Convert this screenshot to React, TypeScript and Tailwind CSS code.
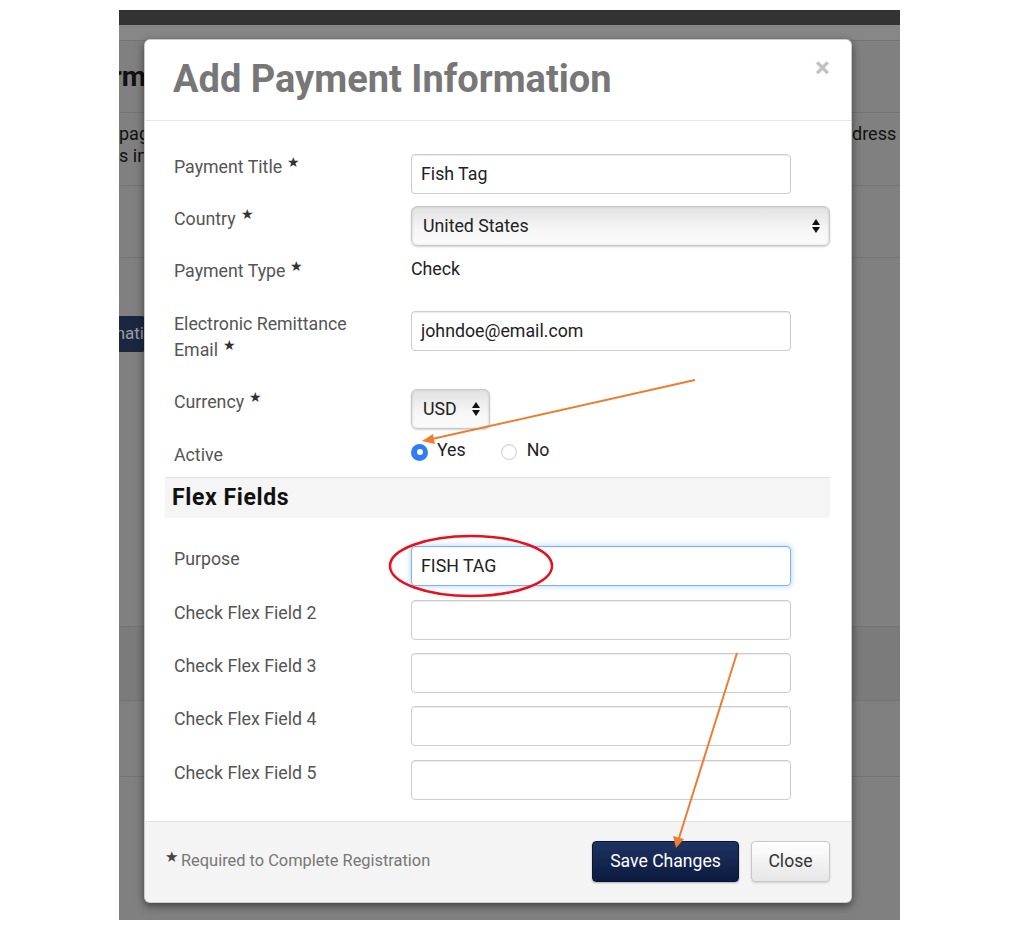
import React from "react";

const Star = () => (
  <span className="relative -top-[6px] ml-[5px] text-[14px] leading-none text-[#333]">★</span>
);

const Arrows = ({ className }: { className: string }) => (
  <svg className={className} width="8" height="14" viewBox="0 0 8 14">
    <path d="M0 6 L4 0 L8 6 Z" fill="#111" />
    <path d="M0 8 L8 8 L4 14 Z" fill="#111" />
  </svg>
);

const inputCls =
  "h-[40px] w-[380px] rounded-[4px] border border-[#cccccc] bg-white px-[9px] text-[17.75px] leading-[38px] text-[#222] shadow-[inset_0_1px_1px_rgba(0,0,0,0.08)]";

const selectCls =
  "h-[40px] rounded-[6px] border border-[#c9c9c9] bg-[linear-gradient(#e2e2e2,#f6f6f6_60%,#fbfbfb)] shadow-[0_1px_2px_rgba(0,0,0,0.18),inset_1px_0_2px_rgba(0,0,0,0.08),inset_-1px_0_2px_rgba(0,0,0,0.08)] flex items-center text-[17.75px] text-[#222]";

function Label({ children }: { children: React.ReactNode }) {
  return (
    <div className="w-[246px] shrink-0 pl-[9px] text-[17.75px] leading-[26px] text-[#555]">
      {children}
    </div>
  );
}

export default function App() {
  const flexRows: { label: string; mb: string }[] = [
    { label: "Check Flex Field 2", mb: "mb-[13px]" },
    { label: "Check Flex Field 3", mb: "mb-[13px]" },
    { label: "Check Flex Field 4", mb: "mb-[14px]" },
    { label: "Check Flex Field 5", mb: "" },
  ];
  return (
    <div className="relative h-[926px] w-[1019px] bg-white pl-[119px] pt-[10px] font-['Roboto','Liberation_Sans',sans-serif]">
      {/* Background page (dimmed) */}
      <div className="relative h-[910px] w-[781px] overflow-hidden bg-[#808080]">
        <div className="h-[15px] overflow-hidden bg-[#333333]">
          <div className="-mt-[16px] whitespace-nowrap pl-[20px] text-[14px] leading-[16px] text-[#bdbdbd]">
            , you agree to the Payment Registration terms, by using the management system you agree to the policy of the company group
          </div>
        </div>
        <div className="h-[16px] border-b border-[#747474] bg-[#878787]" />
        <div className="flex h-[72px] items-center border-b border-[#747474]">
          <div className="flex w-[27px] justify-end overflow-hidden">
            <span className="whitespace-nowrap text-[28px] font-bold text-[#111]">Inform</span>
          </div>
        </div>
        <div className="flex h-[73px] justify-between border-b border-[#747474] pt-[10px]">
          <div className="flex w-[25px] flex-col overflow-hidden text-[18px] leading-[22px] text-[#111]">
            <span className="whitespace-nowrap">pag</span>
            <span className="whitespace-nowrap">s inc</span>
          </div>
          <div className="w-[48px] overflow-hidden text-[18px] leading-[22px] text-[#111]">
            <span className="whitespace-nowrap">dress it if</span>
          </div>
        </div>
        <div className="h-[72px] border-b border-[#747474]" />
        <div className="h-[368px] pt-[58px]">
          <div className="flex h-[36px] w-[26px] items-center justify-end overflow-hidden rounded-r-[3px] bg-[#1b2740]">
            <span className="whitespace-nowrap pr-[1px] text-[17px] text-[#9a9ea8]">nati</span>
          </div>
        </div>
        <div className="h-[75px] border-y border-[#747474] bg-[#7b7b7b]" />
        <div className="h-[76px] border-b border-[#747474]" />

        {/* Modal */}
        <div className="absolute left-[25px] top-[29px] flex h-[864px] w-[708px] flex-col overflow-hidden rounded-[6px] border border-black/20 bg-white shadow-[0_3px_9px_rgba(0,0,0,0.5)]">
          <div className="relative h-[81px] shrink-0 border-b border-[#e5e5e5] pl-[28px] pt-[19px]">
            <h1 className="text-[38px] font-bold leading-[40px] text-[#777]">Add Payment Information</h1>
            <span className="absolute left-[670px] top-[12px] text-[28px] font-bold leading-[32px] text-[#c2c2c2]">×</span>
          </div>

          <div className="pl-[20px] pr-[21px] pt-[33px] pb-[21px]">
            <div className="mb-[12px] flex">
              <Label>
                Payment Title<Star />
              </Label>
              <div className={inputCls}>Fish Tag</div>
            </div>
            <div className="mb-[12px] flex">
              <Label>
                Country<Star />
              </Label>
              <div className={`${selectCls} w-[419px] justify-between pl-[11px] pr-[9px]`}>
                <span>United States</span>
                <Arrows className="" />
              </div>
            </div>
            <div className="mb-[13px] flex h-[40px]">
              <Label>
                Payment Type<Star />
              </Label>
              <div className="text-[17.75px] leading-[22px] text-[#222]">Check</div>
            </div>
            <div className="mb-[26px] flex">
              <Label>
                Electronic Remittance
                <br />
                Email<Star />
              </Label>
              <div className={inputCls}>johndoe@email.com</div>
            </div>
            <div className="mb-[13px] flex">
              <Label>
                Currency<Star />
              </Label>
              <div className={`${selectCls} w-[79px] justify-between pl-[11px] pr-[9px]`}>
                <span>USD</span>
                <Arrows className="" />
              </div>
            </div>
            <div className="mb-[9px] flex h-[26px]">
              <Label>Active</Label>
              <div className="flex h-[18px] items-center text-[17.75px] text-[#222]">
                <span className="mt-[2px] flex h-[17px] w-[17px] items-center justify-center rounded-full bg-[#2f7cf6]">
                  <span className="h-[6px] w-[6px] rounded-full bg-white" />
                </span>
                <span className="ml-[9px] -mt-[2px]">Yes</span>
                <span className="ml-[35px] mt-[2px] h-[16px] w-[16px] rounded-full border border-[#cfcfcf] bg-white shadow-[inset_0_1px_2px_rgba(0,0,0,0.08)]" />
                <span className="ml-[10px] -mt-[2px]">No</span>
              </div>
            </div>
            <div className="mb-[28px] flex h-[41px] items-center border-t border-[#e2e2e2] bg-[#f5f5f5] pl-[7px]">
              <span className="text-[23px] font-bold tracking-[0.6px] text-[#111]">Flex Fields</span>
            </div>
            <div className="mb-[14px] flex">
              <Label>Purpose</Label>
              <div className="h-[40px] w-[380px] rounded-[4px] border border-[#7fb3ee] bg-white px-[9px] text-[17.75px] leading-[38px] text-[#222] shadow-[inset_0_1px_1px_rgba(0,0,0,0.06),0_0_6px_rgba(102,175,233,0.55)]">
                FISH TAG
              </div>
            </div>
            {flexRows.map((r) => (
              <div key={r.label} className={`flex ${r.mb}`}>
                <Label>{r.label}</Label>
                <div className={inputCls} />
              </div>
            ))}
          </div>

          <div className="flex flex-1 items-start justify-between border-t border-[#e2e2e2] bg-[#f4f4f4] pl-[20px] pr-[21px] pt-[19px]">
            <div className="mt-[8px] flex items-start text-[16.4px] leading-[24px] text-[#777]">
              <span className="relative -top-[4px] text-[15px] text-[#444]">★</span>
              <span className="ml-[3px]">Required to Complete Registration</span>
            </div>
            <div className="flex gap-[12px]">
              <div className="flex h-[41px] w-[147px] items-center justify-center rounded-[4px] border border-[#0a1733] bg-[linear-gradient(#1f3363,#0b1a3e)] text-[17.6px] text-white shadow-[0_1px_2px_rgba(0,0,0,0.3)]">
                Save Changes
              </div>
              <div className="flex h-[41px] w-[79px] items-center justify-center rounded-[4px] border border-[#c8c8c8] bg-[linear-gradient(#ffffff,#e6e6e6)] text-[17.6px] text-[#333] shadow-[0_1px_2px_rgba(0,0,0,0.15)]">
                Close
              </div>
            </div>
          </div>
        </div>
      </div>

      {/* Annotations */}
      <svg className="pointer-events-none absolute left-0 top-0" width="1019" height="926">
        <ellipse cx="471" cy="566" rx="81" ry="30" fill="none" stroke="#e8101e" strokeWidth="2.5" />
        <line x1="695" y1="380" x2="432" y2="439" stroke="#ed7d31" strokeWidth="2" />
        <polygon points="422,441 433,434 435,444" fill="#ed7d31" />
        <line x1="737" y1="653" x2="679" y2="838" stroke="#ed7d31" strokeWidth="2" />
        <polygon points="676,848 673,836 684,839" fill="#ed7d31" />
      </svg>
    </div>
  );
}
